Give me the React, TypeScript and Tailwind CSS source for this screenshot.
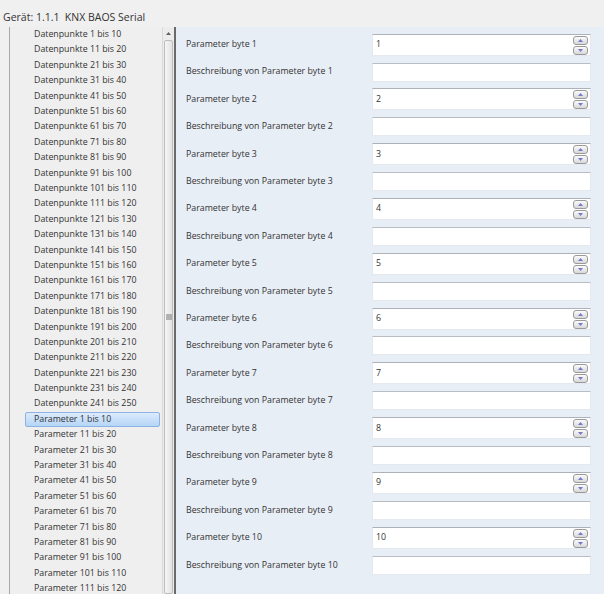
import React from 'react';

const datenpunkte = Array.from({ length: 25 }, (_, i) => `Datenpunkte ${i * 10 + 1} bis ${i * 10 + 10}`);
const parameter = Array.from({ length: 12 }, (_, i) => `Parameter ${i * 10 + 1} bis ${i * 10 + 10}`);
const bytes = Array.from({ length: 10 }, (_, i) => i + 1);

function Spinner() {
  return (
    <div className="absolute right-[2px] top-[1px] flex flex-col gap-[1px]">
      {['up', 'down'].map((d) => (
        <div
          key={d}
          className="w-[15px] h-[9px] rounded-[3px] border border-[#9a9a9a] bg-gradient-to-b from-[#fbfbfb] to-[#d8d8d8] flex items-center justify-center"
        >
          <svg width="5" height="3" viewBox="0 0 5 3">
            {d === 'up' ? <path d="M0 3 L2.5 0 L5 3 Z" fill="#7479c9" /> : <path d="M0 0 L2.5 3 L5 0 Z" fill="#7479c9" />}
          </svg>
        </div>
      ))}
    </div>
  );
}

function ParamRow({ n }: { n: number }) {
  return (
    <>
      <div className="h-[27.4px] flex items-center">
        <span className="w-[186px]">Parameter byte {n}</span>
        <div className="relative w-[219px] h-[22px] bg-white border border-[#e3e9ef] border-t-[#acb2b8] flex items-center pl-[3px]">
          {n}
          <Spinner />
        </div>
      </div>
      <div className="h-[27.4px] flex items-center">
        <span className="w-[186px]">Beschreibung von Parameter byte {n}</span>
        <div className="w-[219px] h-[19px] bg-white border border-[#e3e9ef] border-t-[#b9bec4]" />
      </div>
    </>
  );
}

export default function App() {
  return (
    <div
      className="w-[604px] h-[594px] bg-[#f0f0f0] flex flex-col overflow-hidden text-[8.8px] text-[#333]"
      style={{ fontFamily: '"Open Sans", "Noto Sans", sans-serif' }}
    >
      <div className="h-[27px] flex items-center pl-[3px] pt-[8px] text-[10.5px]">Gerät: 1.1.1&nbsp;&nbsp;KNX BAOS Serial</div>
      <div className="flex flex-1 min-h-0">
        {/* tree */}
        <div className="w-[162px] pl-[9px] flex">
          <div className="flex-1 border-l border-[#a8a8a8] bg-[#efefef] overflow-hidden">
            {datenpunkte.concat(parameter).map((t, i) => {
              const sel = i === 25;
              return (
                <div key={t} className="h-[15.4px] flex items-center pl-[15px] pr-[2px]">
                  <div
                    className={
                      sel
                        ? 'flex-1 h-full flex items-center pl-[8px] border border-[#8db2e3] bg-gradient-to-b from-[#dcebfc] to-[#b5d5f7] rounded-[2px]'
                        : 'flex-1 h-full flex items-center pl-[9px]'
                    }
                  >
                    {t}
                  </div>
                </div>
              );
            })}
          </div>
        </div>
        {/* scrollbar */}
        <div className="w-[12px] flex flex-col bg-[#ececec] border-l border-[#dadada]">
          <div className="h-[12px] flex items-center justify-center">
            <svg width="5" height="3" viewBox="0 0 5 3">
              <path d="M0 3 L2.5 0 L5 3 Z" fill="#606060" />
            </svg>
          </div>
          <div className="flex-1 mx-[1px] mt-[1px] border border-[#bdbdbd] rounded-[2px] bg-gradient-to-r from-[#f6f6f6] to-[#e2e2e2] flex items-center justify-center">
            <svg width="6" height="6" viewBox="0 0 6 6">
              <path d="M0 1h6M0 3h6M0 5h6" stroke="#777" strokeWidth="1" />
            </svg>
          </div>
        </div>
        {/* splitter */}
        <div className="w-[2px] bg-[#f0f0f0] border-r-2 border-[#6a6a6a]" />
        {/* parameter grid */}
        <div className="flex-1 bg-[#e8eef6] pl-[10px] pt-[4px] flex flex-col">
          {bytes.map((n) => (
            <ParamRow key={n} n={n} />
          ))}
        </div>
      </div>
    </div>
  );
}
